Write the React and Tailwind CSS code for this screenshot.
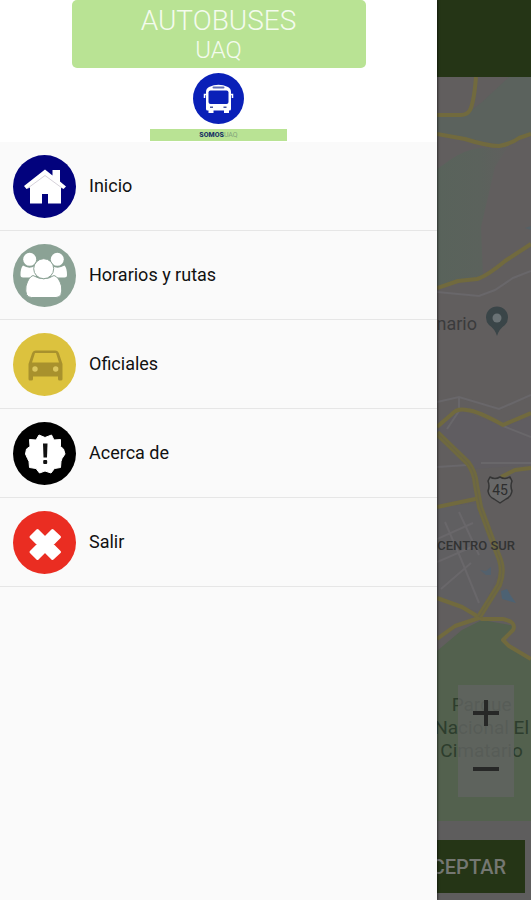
import { useState } from 'react';

const HomeIcon = () => (
  <svg viewBox="0 0 63 63" className="size-[63px] shrink-0" aria-hidden="true">
    <circle cx="31.5" cy="31.5" r="31.5" fill="#02027d" />
    <path d="M11 31 L32 14.5 L39.5 20.5 V15 H47 V26.5 L53 31.5 L50.5 34 L48 32.5 V48.5 H35 V39 H29 V48.5 H17 V32.5 L13.5 34 Z" fill="#fff" />
    <path d="M15 33 L32 20.5 L49 33" fill="none" stroke="#d6d2da" strokeWidth="1" />
  </svg>
);

const PeopleIcon = () => (
  <svg viewBox="0 0 63 63" className="size-[63px] shrink-0" aria-hidden="true">
    <circle cx="31.5" cy="31.5" r="31.5" fill="#8ba295" />
    <g fill="#fff">
      <circle cx="16.7" cy="15.3" r="6.5" />
      <circle cx="44.3" cy="15.3" r="6.5" />
      <path d="M10 21.5 Q16 25.5 22 22 L23 33.500 H10 Q7.500 33.500 7.500 31 Q7.500 24 10 21.5 Z" />
      <path d="M51.5 21.5 Q45 25.5 39 22 L38 33.500 H51.5 Q54 33.500 54 31 Q54 24 51.5 21.5 Z" />
    </g>
    <g fill="#fff" stroke="#8ba295">
      <path d="M20 31.5 Q31 38 41 31.5 Q46 33 48.500 42 Q50 53.500 43 53.500 H18.500 Q11.500 53.500 13 42 Q15.500 33 20 31.5 Z" />
      <circle cx="30.7" cy="24.7" r="10" />
    </g>
  </svg>
);

const CarIcon = () => (
  <svg viewBox="0 0 63 63" className="size-[63px] shrink-0" aria-hidden="true">
    <circle cx="31.5" cy="31.5" r="31.5" fill="#dcc23e" />
    <path
      d="M23 17.5 H42 Q45 17.5 46 20.5 L49.5 31 V46 Q49.5 47.5 48 47.5 H46.5 Q45 47.5 45 46 V43.5 H20 V46 Q20 47.5 18.5 47.5 H17 Q15.5 47.5 15.5 46 V31 L19 20.5 Q20 17.5 23 17.5 Z M22 20 L19 29.5 H46 L43 20 Z"
      fill="#a8912d"
      fillRule="evenodd"
    />
    <circle cx="22" cy="36" r="2.7" fill="#dcc75f" />
    <circle cx="42.7" cy="36" r="2.7" fill="#dcc75f" />
  </svg>
);

const AboutIcon = () => (
  <svg viewBox="0 0 63 63" className="size-[63px] shrink-0" aria-hidden="true">
    <circle cx="31.5" cy="31.5" r="31.5" fill="#000" />
    <path
      d="M32 15.5 L38.5 13 L41 18 L47.5 17.5 L47.5 24.5 L50.5 27 L52 32 L49 36.5 L48 39.5 L47.5 45.500 L41.500 46.500 L38 51 L32 49 L26.500 51 L23 46.500 L16.500 45.500 L16 39.5 L14.500 36.5 L12.500 32 L13.500 27 L17 24.5 L16.500 17.5 L23 18 L26 13 Z"
      fill="#fff"
      stroke="#fff"
      strokeWidth="1"
      strokeLinejoin="round"
    />
    <path d="M30 21.5 H34.500 L34 35.500 H30.500 Z" fill="#111" />
    <rect x="30.2" y="38" width="4" height="4" rx="1" fill="#111" />
  </svg>
);

const ExitIcon = () => (
  <svg viewBox="0 0 63 63" className="size-[63px] shrink-0" aria-hidden="true">
    <circle cx="31.5" cy="31.5" r="31.5" fill="#ea2d22" />
    <path
      d="M24.500 19.5 L32 27 L39.500 19.5 L46.500 26 L39 33.500 L46.500 41 L39.500 47.5 L32 40 L24.500 47.5 L18 41 L25.500 33.500 L18 26 Z"
      fill="#fff"
      stroke="#fff"
      strokeWidth="3"
      strokeLinejoin="round"
    />
  </svg>
);

const BusLogo = () => (
  <svg viewBox="0 0 51 51" className="mt-[5px] size-[51px]" aria-hidden="true">
    <circle cx="25.5" cy="25.5" r="25.5" fill="#0a20b8" />
    <path d="M16 14 Q25.5 9.5 35 14 Q38 15.5 38 19 V36 Q38 37.5 36.5 37.5 H36 V40 H31 V37.5 H20.5 V40 H15.5 V37.5 H14.5 Q13 37.5 13 36 V19 Q13 15.5 16 14 Z" fill="#fff" />
    <path d="M13 21.5 H11.5 V25 M38 21.5 H39.5 V25" fill="none" stroke="#fff" strokeWidth="1.5" />
    <rect x="19.5" y="13.5" width="12" height="2" rx="1" fill="#5d6cb8" />
    <rect x="15.5" y="17.5" width="20" height="13.5" rx="2" fill="#0a20b8" />
    <rect x="17" y="33.5" width="3" height="1.5" fill="#46559e" />
    <rect x="30.5" y="33.5" width="3" height="1.5" fill="#46559e" />
  </svg>
);

const menuItems = [
  { id: 'inicio', label: 'Inicio', Icon: HomeIcon },
  { id: 'horarios', label: 'Horarios y rutas', Icon: PeopleIcon },
  { id: 'oficiales', label: 'Oficiales', Icon: CarIcon },
  { id: 'acerca', label: 'Acerca de', Icon: AboutIcon },
  { id: 'salir', label: 'Salir', Icon: ExitIcon },
];

const Drawer = () => (
  <aside className="relative z-10 bg-[#fafafa] shadow-[1px_0_2px_rgba(0,0,0,0.5)]">
    <header className="flex h-[142px] flex-col items-center bg-white">
      <h1 className="flex h-[68px] w-[294px] flex-col items-center rounded-[5px] bg-[#b9e394] pt-[6px] font-light text-[#f4fbee]">
        <span className="text-[28px] leading-[30px]">AUTOBUSES</span>
        <span className="text-2xl leading-[28px]">UAQ</span>
      </h1>
      <BusLogo />
      <p className="mt-[5px] h-3 w-[137px] bg-[#b9e394] text-center text-[7px] leading-[12px] text-[#83a37b]">
        <span className="font-black text-[#1c3565]">SOMOS</span>UAQ
      </p>
    </header>
    <nav>
      <ul>
        {menuItems.map(({ id, label, Icon }) => (
          <li key={id} className="border-b border-[#e6e6e6]">
            <a href={`#${id}`} className="flex h-[88px] items-center gap-[13px] pl-[13px] text-lg text-[#111]">
              <Icon />
              {label}
            </a>
          </li>
        ))}
      </ul>
    </nav>
  </aside>
);

const MapDrawing = () => (
  <svg viewBox="0 0 94 744" preserveAspectRatio="xMinYMin slice" className="absolute inset-0 size-full" aria-hidden="true">
    <defs>
      <linearGradient id="hill" x1="0" x2="1" y1="0" y2="0">
        <stop offset="0" stopColor="#59635b" />
        <stop offset="0.6" stopColor="#5b625c" />
        <stop offset="1" stopColor="#605f5e" />
      </linearGradient>
    </defs>
    <rect width="94" height="744" fill="#615e5e" />
    <path d="M0 38 H28 L44 26 L72 0 H94 V57 L70 69 L28 61 L0 57 Z" fill="#5b625d" />
    <path d="M6 88 Q34 66 58 72 L72 68 L58 90 L44 150 L46 200 L21 204 L0 211 V92 Z" fill="url(#hill)" />
    <path d="M0 350 L24 334 L66 349 L94 340 V388 L38 392 L0 360 Z" fill="#605d61" />
    <path d="M0 430 L42 426 L64 490 L44 536 L0 520 Z" fill="#605f61" />
    <path d="M0 574 L25 553 L45 543 L78 549 L66 565 L94 582 V744 H0 Z" fill="#53614e" />

    {/* side streets */}
    <g fill="none" stroke="#69676a" strokeWidth="2">
      <path d="M0 215 L42 219 L58 213 L76 201 L94 194" />
      <path d="M0 325 L22 320 L62 332 L94 318" />
      <path d="M22 320 V334 L10 352 M66 349 L94 360" />
      <path d="M0 390 L31 388 M44 386 L94 386" />
      <path d="M8 445 L24 482 L42 526 M0 462 L36 446 M0 485 L44 466 M4 512 L34 486 M22 435 L42 478" />
    </g>

    {/* main roads */}
    <g fill="none" stroke="#716a3e" strokeWidth="4" strokeLinejoin="round">
      <path d="M39 0 Q37 25 33 33 Q30 38 24 38 H0" />
      <path d="M0 57 L28 62 Q50 69 62 69 Q74 67 82 61 L94 57" />
      <path d="M0 211 L21 204 L40 202 Q50 199 68 184 L94 167" />
      <path d="M0 350 L15 337 Q20 331 30 333 Q41 334 66 348 L94 336" />
      <path d="M0 430 L43 421 M64 400 L78 393 L94 391" />
      <path d="M0 521 L25 530 L45 542 L66 542 Q80 545 76 553 L66 563 L72 569 L94 582" />
      <path d="M0 562 L18 549 L45 540" />
    </g>
    <g fill="none" strokeLinejoin="round">
      <path d="M0 356 L31 386 Q38 395 39 408 L43 430 L53 457 L63 483 Q67 495 62 508 L42 540" stroke="#6f693f" strokeWidth="6" />
      <path d="M0 356 L31 386 Q38 395 39 408 L43 430 L53 457 L63 483 Q67 495 62 508 L42 540" stroke="#69644a" strokeWidth="1" />
    </g>

    <path d="M43 493 L49 494 L54 490 V498 H49 Z" fill="#53616d" />
    <path d="M64 514 L70 512 L74 519 L79 526 L65 522 Z" fill="#4d6273" />
    <path d="M88 151 L94 149 V153 Z" fill="#566166" />

    {/* place marker */}
    <path d="M60 259 Q58 252 52 248 A11 11 0 1 1 68 248 Q62 252 60 259 Z" fill="#3a4548" />
    <circle cx="60" cy="241" r="4.5" fill="#6a7275" />

    {/* highway shield */}
    <path
      d="M53 400 Q58 403 63 400 Q68 403 73 400 L75 404 Q73 409 75 414 Q74 420 69 422 L63 426 L57 422 Q52 420 51 414 Q53 409 51 404 Z"
      fill="#686868"
      stroke="#353535"
      strokeWidth="1.5"
      strokeLinejoin="round"
    />
  </svg>
);

const MapScreen = () => {
  const [, setZoom] = useState(13);

  return (
    <main className="flex min-w-0 flex-col overflow-hidden bg-[#5e5d5d]">
      <div className="h-[77px] shrink-0 bg-[#253516]" />
      <section className="relative flex-1 overflow-hidden" aria-label="Mapa">
        <MapDrawing />
        <span className="absolute top-[236px] right-[54px] text-lg leading-[22px] text-[#3b3b3c]">nario</span>
        <span className="absolute top-[403px] left-[51px] w-6 text-center text-[14px] leading-[20px] text-[#2d2d2d]">45</span>
        <span className="absolute top-[460px] right-4 text-[13px] leading-[18px] font-medium whitespace-nowrap text-[#323333]">
          CENTRO SUR
        </span>
        <p className="absolute top-[616px] right-[2px] text-center text-[19px] leading-[23px] whitespace-nowrap text-[#2d3d2d]">
          Parque
          <br />
          Nacional El
          <br />
          Cimatario
        </p>
        <div className="absolute right-[17px] bottom-[24px] flex w-14 flex-col bg-[#616461]/80">
          <button type="button" aria-label="Acercar" className="flex h-14 items-center justify-center" onClick={() => setZoom((z) => z + 1)}>
            <svg viewBox="0 0 26 26" className="size-[26px]" aria-hidden="true">
              <path d="M0 13 H26 M13 0 V26" stroke="#272827" strokeWidth="4" />
            </svg>
          </button>
          <button type="button" aria-label="Alejar" className="flex h-14 items-center justify-center" onClick={() => setZoom((z) => z - 1)}>
            <svg viewBox="0 0 26 26" className="size-[26px]" aria-hidden="true">
              <path d="M0 13 H26" stroke="#272827" strokeWidth="4" />
            </svg>
          </button>
        </div>
      </section>
      <footer className="flex justify-end pt-[19px] pr-[6px] pb-[7px]">
        <button type="button" className="h-[53px] shrink-0 bg-[#253516] pr-[19px] pl-5 text-xl font-medium text-[#747772]">
          ACEPTAR
        </button>
      </footer>
    </main>
  );
};

const App = () => (
  <div className="grid min-h-screen grid-cols-[437fr_94fr] overflow-hidden font-[Roboto,sans-serif]">
    <Drawer />
    <MapScreen />
  </div>
);

export default App;
